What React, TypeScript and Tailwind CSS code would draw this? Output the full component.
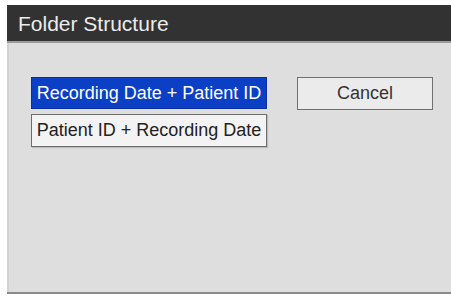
export default function App() {
  return (
    <div className="h-[296px] w-[451px] bg-white pl-[7px] pt-[5px] font-['Liberation_Sans',Arial,sans-serif]">
      <div className="flex h-[289px] flex-col border-b-2 border-[#8a8a8a] bg-[#dedede]">
        <div className="flex h-[38px] items-center border-b-2 border-[#9a9a9a] bg-[#323232] pl-[11px]">
          <span className="text-[21px] leading-none text-[#ececec]">Folder Structure</span>
        </div>
        <div className="flex flex-1 border-l-2 border-[#d2d2d2] pl-[22px] pt-[34px]">
          <div className="flex flex-col gap-[5px]">
            <div className="flex h-[32px] w-[236px] items-center justify-center whitespace-nowrap border border-[#0a2f9a] bg-[#0b3fc6] text-[18px] text-white">
              Recording Date + Patient ID
            </div>
            <div className="flex h-[33px] w-[236px] items-center justify-center whitespace-nowrap border border-[#6e6e6e] bg-[#f3f3f3] text-[18px] text-[#222] shadow-[1px_1px_1px_rgba(0,0,0,0.15)]">
              Patient ID + Recording Date
            </div>
          </div>
          <div className="ml-[30px] flex h-[33px] w-[136px] items-center justify-center border border-[#707070] bg-[#ebebeb] text-[18px] text-[#333]">
            Cancel
          </div>
        </div>
      </div>
    </div>
  );
}
